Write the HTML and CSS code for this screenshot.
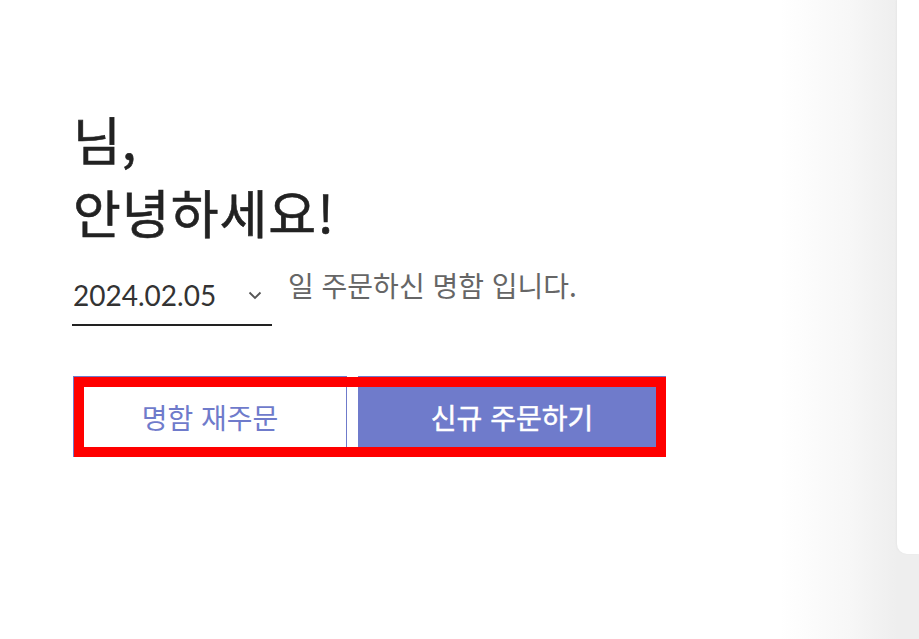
FILE: index.html
```html
<!DOCTYPE html>
<html lang="ko">
    <head>
        <meta charset="UTF-8">
        <title>명함 주문</title>
        <link rel="stylesheet" href="styles.css">
    </head>
    <body>
        <div class="page">
            <main class="welcome">
                <h1 class="greeting">님,<br>안녕하세요!</h1>

                <div class="order-date">
                    <label class="date-select" for="orderDate">
                        <span class="date-value">2024.02.05</span>
                        <svg class="chevron" viewBox="0 0 14 9" width="14" height="9">
                            <path d="M1.5 1.5 7 7l5.5-5.5" fill="none" stroke="#555" stroke-width="1.8"/>
                        </svg>
                    </label>
                    <span class="date-note">일 주문하신 명함 입니다.</span>
                </div>

                <div class="actions">
                    <button class="btn btn-outline">명함 재주문</button>
                    <button class="btn btn-fill">신규 주문하기</button>
                </div>
            </main>

            <aside class="side">
                <div class="side-card"></div>
            </aside>
        </div>
    </body>
</html>
```

FILE: styles.css
```css
body {
    margin: 0;
    height: 639px;
    overflow: hidden;
    background: linear-gradient(to right, #fff 780px, #f7f7f7 850px, #eeeeee 897px);
    color: #222;
    font-family: "Noto Sans CJK KR", "Noto Sans", sans-serif;
}

.page {
    display: flex;
    height: 100%;
}

.welcome {
    flex: 1;
    padding: 102px 0 0 73px;
}

.greeting {
    margin: 0;
    font-size: 52px;
    font-weight: 400;
    line-height: 73px;
    letter-spacing: 1px;
    -webkit-text-stroke: 0.6px #222;
}

.order-date {
    display: flex;
    align-items: flex-start;
    margin-top: 24px;
}

.date-select {
    width: 200px;
    height: 54px;
    box-sizing: border-box;
    display: flex;
    align-items: center;
    justify-content: space-between;
    padding: 0 10px 6px 0;
    margin-left: -1px;
    border-bottom: 2px solid #222;
    cursor: pointer;
}

.date-value {
    font-family: Lato, "Noto Sans", sans-serif;
    font-size: 28px;
    color: #333;
    margin-left: 1px;
}

.chevron {
    display: block;
}

.date-note {
    margin-left: 16px;
    font-size: 28px;
    line-height: 34px;
    color: #666;
    margin-top: -4px;
}

.actions {
    position: relative;
    display: flex;
    width: 593px;
    height: 81px;
    margin-top: 50px;
}

.actions::after {
    content: "";
    position: absolute;
    top: 1px;
    left: 1px;
    right: 0;
    bottom: 0;
    border: 10px solid #ff0000;
    pointer-events: none;
}

.btn {
    height: 100%;
    border: 1px solid #6f7bcb;
    font-family: "Noto Sans CJK KR", "Noto Sans", sans-serif;
    font-size: 28px;
    cursor: pointer;
}

.btn-outline {
    width: 274px;
    background: #fff;
    color: #6f7bcb;
}

.btn-fill {
    flex: 1;
    margin-left: 11px;
    background: #6f7bcb;
    color: #fff;
    font-weight: 400;
    -webkit-text-stroke: 0.5px #fff;
}

.side {
    width: 22px;
}

.side-card {
    height: 554px;
    background: #fff;
    border-bottom-left-radius: 10px;
    box-shadow: -1px 0 2px rgba(0, 0, 0, 0.03);
}
```
